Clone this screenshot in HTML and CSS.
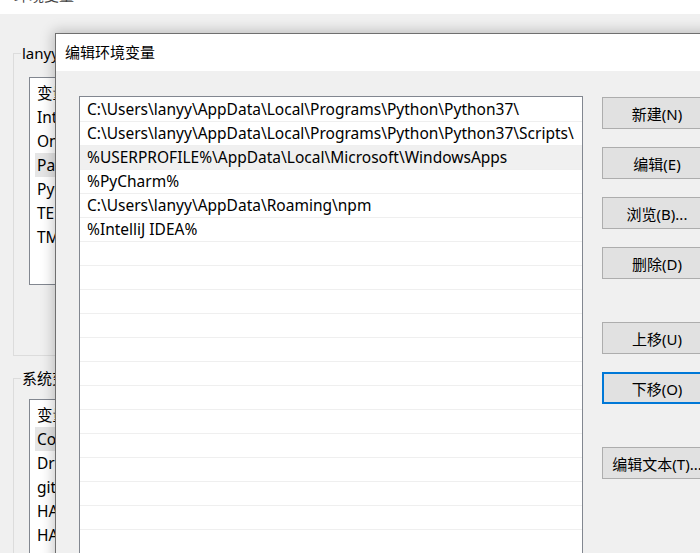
FILE: index.html
```html
<!DOCTYPE html>
<html lang="zh-CN">
<head>
<meta charset="utf-8">
<title>编辑环境变量</title>
<link rel="stylesheet" href="styles.css">
</head>
<body>
<div class="bgwin">
  <div class="bgtitle"><span class="bgtitle-text">环境变量</span></div>
  <div class="bgbody">
    <fieldset class="group group-user">
      <legend>lanyy 的用户变量(U)</legend>
      <div class="blist blist-user">
        <div class="bhead"><span class="bcol">变量</span><span>值</span></div>
        <div class="brow"><span class="bcol">IntelliJ IDEA</span></div>
        <div class="brow"><span class="bcol">OneDrive</span></div>
        <div class="brow brow-sel"><span class="bcol">Path</span></div>
        <div class="brow"><span class="bcol">PyCharm</span></div>
        <div class="brow"><span class="bcol">TEMP</span></div>
        <div class="brow"><span class="bcol">TMP</span></div>
      </div>
    </fieldset>
    <fieldset class="group group-sys">
      <legend>系统变量(S)</legend>
      <div class="blist blist-sys">
        <div class="bhead"><span class="bcol">变量</span><span>值</span></div>
        <div class="brow brow-sel"><span class="bcol">ComSpec</span></div>
        <div class="brow"><span class="bcol">DriverData</span></div>
        <div class="brow"><span class="bcol">git</span></div>
        <div class="brow"><span class="bcol">HADOOP_HOME</span></div>
        <div class="brow"><span class="bcol">HADOOP_USER_NAME</span></div>
      </div>
    </fieldset>
  </div>
</div>

<div class="dialog">
  <div class="dtitle">编辑环境变量</div>
  <div class="dbody">
    <div class="plist">
      <div class="prow">C:\Users\lanyy\AppData\Local\Programs\Python\Python37\</div>
      <div class="prow">C:\Users\lanyy\AppData\Local\Programs\Python\Python37\Scripts\</div>
      <div class="prow prow-sel">%USERPROFILE%\AppData\Local\Microsoft\WindowsApps</div>
      <div class="prow">%PyCharm%</div>
      <div class="prow">C:\Users\lanyy\AppData\Roaming\npm</div>
      <div class="prow">%IntelliJ IDEA%</div>
      <div class="prow"></div>
      <div class="prow"></div>
      <div class="prow"></div>
      <div class="prow"></div>
      <div class="prow"></div>
      <div class="prow"></div>
      <div class="prow"></div>
      <div class="prow"></div>
      <div class="prow"></div>
      <div class="prow"></div>
      <div class="prow"></div>
      <div class="prow"></div>
      <div class="prow"></div>
    </div>
    <div class="buttons">
      <button class="btn">新建(N)</button>
      <button class="btn">编辑(E)</button>
      <button class="btn">浏览(B)...</button>
      <button class="btn">删除(D)</button>
      <button class="btn btn-group">上移(U)</button>
      <button class="btn btn-focus">下移(O)</button>
      <button class="btn btn-group">编辑文本(T)...</button>
    </div>
  </div>
</div>
</body>
</html>
```

FILE: styles.css
```css
* { box-sizing: border-box; }

html, body {
  margin: 0;
  padding: 0;
}

body {
  width: 700px;
  height: 553px;
  overflow: hidden;
  position: relative;
  background: #f0f0f0;
  font-family: "Noto Sans", "Noto Sans CJK SC", sans-serif;
  font-size: 15px;
  color: #000;
}

/* ---------- background window ---------- */
.bgtitle {
  height: 14px;
  background: #fff;
  overflow: hidden;
  padding-left: 14px;
}

.bgtitle-text {
  display: block;
  line-height: 20px;
  margin-top: -15px;
  color: #444;
}

.group {
  margin: 29px 0 0 13px;
  width: 640px;
  border: 1px solid #dcdcdc;
  padding: 14px 0 70px 7px;
}

.group legend {
  padding: 0 1px;
  line-height: 20px;
  height: 20px;
}

.group-sys {
  margin-top: 12px;
  padding-top: 11px;
  padding-bottom: 0;
}

.blist {
  margin-left: 8px;
  width: 600px;
  background: #fff;
  border: 1px solid #828790;
  padding-top: 3px;
}

.blist-user { height: 208px; }
.blist-sys { height: 200px; }

.bhead,
.brow {
  height: 24px;
  line-height: 24px;
  padding-left: 7px;
  display: flex;
  font-size: 15.5px;
}

.brow-sel {
  margin-left: 5px;
  padding-left: 2px;
  background: #e5e5e5;
}

.bcol { width: 160px; }

/* ---------- dialog ---------- */
.dialog {
  position: absolute;
  left: 55px;
  top: 33px;
  width: 700px;
  height: 600px;
  border: 1px solid #6f6f6f;
  background: #f0f0f0;
  box-shadow: 0 0 12px 2px rgba(0, 0, 0, 0.22);
}

.dtitle {
  height: 37px;
  line-height: 37px;
  background: #fff;
  padding-left: 9px;
}

.dbody {
  display: flex;
  align-items: flex-start;
  gap: 19px;
  padding: 25px 0 0 23px;
}

.plist {
  width: 504px;
  height: 560px;
  flex-shrink: 0;
  background: #fff;
  border: 1px solid #828790;
  padding-top: 1px;
}

.prow {
  height: 24px;
  line-height: 23px;
  padding-left: 7px;
  border-bottom: 1px solid #efefef;
  white-space: nowrap;
  overflow: hidden;
  font-size: 15.5px;
}

.prow-sel {
  background: #f0f0f0;
}

.buttons {
  margin-top: 1px;
  display: flex;
  flex-direction: column;
  gap: 18px;
  flex-shrink: 0;
}

.btn {
  width: 110px;
  height: 32px;
  margin: 0;
  padding: 0;
  background: #e1e1e1;
  border: 1px solid #adadad;
  font-family: inherit;
  font-size: 15px;
  color: #000;
  white-space: nowrap;
}

.btn-group { margin-top: 25px; }

.btn-focus {
  border: 2px solid #0078d7;
}
```
